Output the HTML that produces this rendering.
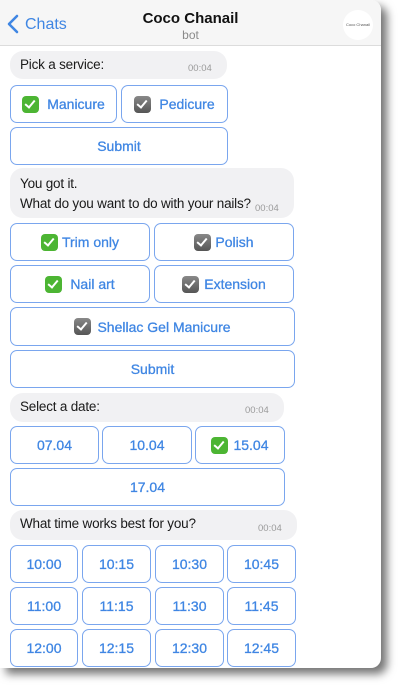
<!DOCTYPE html>
<html><head><meta charset="utf-8"><style>
*{box-sizing:border-box;margin:0;padding:0}
body{width:400px;height:688px;background:#fff;position:relative;overflow:hidden;font-family:"Liberation Sans",sans-serif}
.phone{position:absolute;left:0;top:0;width:381px;height:668px;background:#fff;border-radius:0 10px 10px 0;box-shadow:6px 6px 9px rgba(0,0,0,.55);overflow:hidden}
.hdr{position:absolute;left:0;top:0;width:381px;height:46px;background:#f6f6f6;border-bottom:1px solid #dcdcdc}
.a{position:absolute;white-space:nowrap}
.bub{position:absolute;background:#f1f1f3;border-radius:13px;font-size:13.5px;letter-spacing:-0.2px;color:#1a1a1a}
.tm{position:absolute;font-size:9.5px;color:#9a9a9a;letter-spacing:0}
.b{position:absolute;border:1.3px solid #7aa6ee;border-radius:7px;color:#3f86e3;font-size:14px;display:flex;align-items:center;justify-content:center;background:#fff;-webkit-text-stroke:0.3px #3f86e3}
.ck{display:inline-block;width:17px;height:17px;border-radius:4px;margin-right:8px;position:relative;vertical-align:middle;-webkit-text-stroke:0}
.g{background:#4cb533}.y{background:linear-gradient(#888,#555)}
.ck:after{content:"";position:absolute;left:5px;top:2px;width:4px;height:8px;border:solid #fff;border-width:0 2.5px 2.5px 0;transform:rotate(40deg)}
</style></head><body>
<div class="phone">
<div class="hdr">
<svg class="a" style="left:7px;top:14px" width="12" height="20" viewBox="0 0 12 20"><path d="M10 2 L2 10 L10 18" stroke="#3f86e3" stroke-width="2.6" fill="none" stroke-linecap="round" stroke-linejoin="round"/></svg>
<div class="a" style="left:25px;top:16px;font-size:16px;color:#3f86e3">Chats</div>
<div class="a" style="left:0;width:381px;text-align:center;top:10px;font-size:15px;font-weight:bold;color:#111">Coco Chanail</div>
<div class="a" style="left:0;width:381px;text-align:center;top:28px;font-size:12px;color:#8a8a8a">bot</div>
<div class="a" style="left:343px;top:10px;width:30px;height:30px;border-radius:50%;background:#fff;font-size:4px;color:#555;text-align:center;line-height:30px">Coco Chanail</div>
</div>
<div class="bub" style="left:10px;top:51px;width:217px;height:28px"><span class="a" style="left:10px;top:6px">Pick a service:</span><span class="tm" style="left:178px;top:12px">00:04</span></div>
<div class="b" style="left:10px;top:85px;width:107px;height:38px"><span class="ck g"></span>Manicure</div>
<div class="b" style="left:121px;top:85px;width:107px;height:38px"><span class="ck y"></span>Pedicure</div>
<div class="b" style="left:10px;top:127px;width:218px;height:38px">Submit</div>
<div class="bub" style="left:10px;top:168px;width:284px;height:50px"><span class="a" style="left:10px;top:8px">You got it.</span><span class="a" style="left:10px;top:28px">What do you want to do with your nails?</span><span class="tm" style="left:245px;top:35px">00:04</span></div>
<div class="b" style="left:10px;top:223px;width:140px;height:38px"><span class="ck g" style="margin-right:4px"></span>Trim only</div>
<div class="b" style="left:154px;top:223px;width:140px;height:38px"><span class="ck y" style="margin-right:4px"></span>Polish</div>
<div class="b" style="left:10px;top:265px;width:140px;height:38px"><span class="ck g"></span>Nail art</div>
<div class="b" style="left:154px;top:265px;width:140px;height:38px"><span class="ck y" style="margin-right:5px"></span>Extension</div>
<div class="b" style="left:10px;top:307px;width:285px;height:39px"><span class="ck y" style="margin-right:6px"></span>Shellac Gel Manicure</div>
<div class="b" style="left:10px;top:350px;width:285px;height:38px">Submit</div>
<div class="bub" style="left:10px;top:393px;width:274px;height:29px"><span class="a" style="left:10px;top:6px">Select a date:</span><span class="tm" style="left:235px;top:12px">00:04</span></div>
<div class="b" style="left:10px;top:426px;width:89px;height:38px">07.04</div>
<div class="b" style="left:102px;top:426px;width:90px;height:38px">10.04</div>
<div class="b" style="left:195px;top:426px;width:90px;height:38px"><span class="ck g" style="margin-right:5px"></span>15.04</div>
<div class="b" style="left:10px;top:468px;width:275px;height:38px">17.04</div>
<div class="bub" style="left:10px;top:510px;width:287px;height:30px"><span class="a" style="left:10px;top:6px">What time works best for you?</span><span class="tm" style="left:248px;top:13px">00:04</span></div>
<div class="b" style="left:10px;top:545px;width:68px;height:38px">10:00</div>
<div class="b" style="left:82px;top:545px;width:69px;height:38px">10:15</div>
<div class="b" style="left:155px;top:545px;width:69px;height:38px">10:30</div>
<div class="b" style="left:227px;top:545px;width:69px;height:38px">10:45</div>
<div class="b" style="left:10px;top:587px;width:68px;height:38px">11:00</div>
<div class="b" style="left:82px;top:587px;width:69px;height:38px">11:15</div>
<div class="b" style="left:155px;top:587px;width:69px;height:38px">11:30</div>
<div class="b" style="left:227px;top:587px;width:69px;height:38px">11:45</div>
<div class="b" style="left:10px;top:629px;width:68px;height:38px">12:00</div>
<div class="b" style="left:82px;top:629px;width:69px;height:38px">12:15</div>
<div class="b" style="left:155px;top:629px;width:69px;height:38px">12:30</div>
<div class="b" style="left:227px;top:629px;width:69px;height:38px">12:45</div>
</div>
</body></html>
